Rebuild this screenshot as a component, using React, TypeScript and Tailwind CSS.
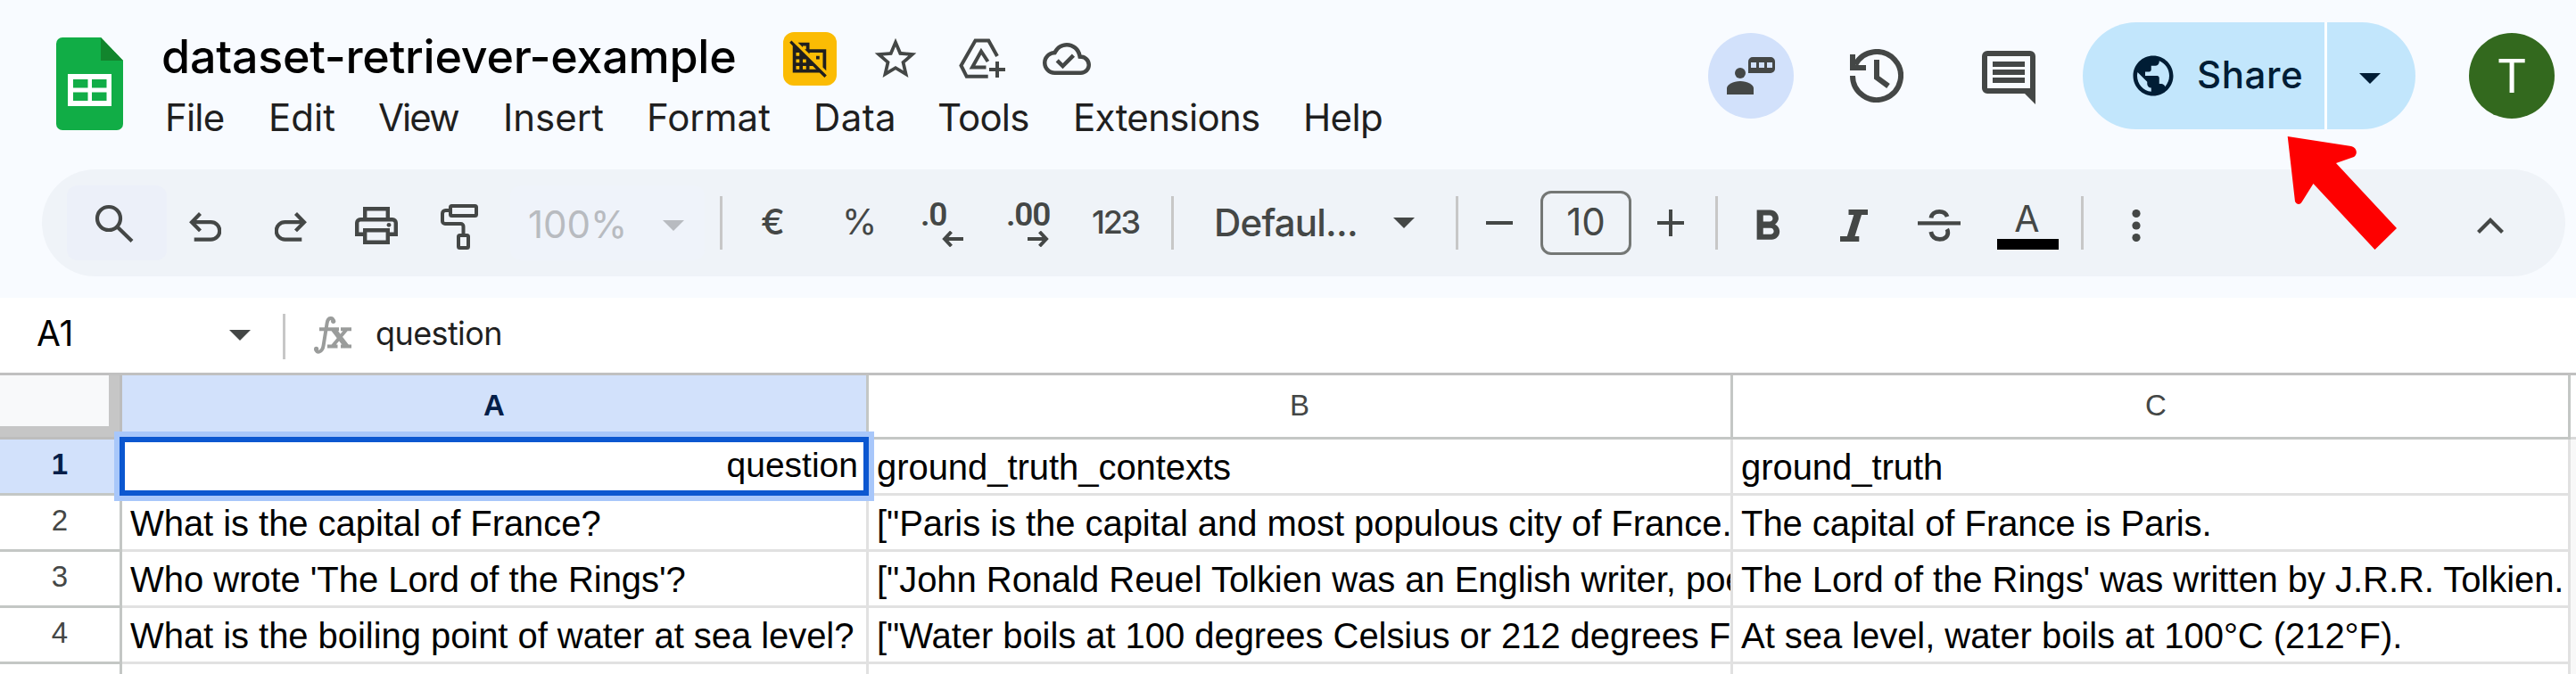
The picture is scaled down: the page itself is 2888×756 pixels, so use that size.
import type { ReactNode } from "react";
import { MdDomainDisabled, MdFormatBold, MdOutlineCloudDone, MdPublic, MdStarBorder } from "react-icons/md";

function Triangle({ className }: { className: string }) {
  return (
    <svg viewBox="0 0 24 12" className={`h-3 w-6 shrink-0 ${className}`} fill="currentColor">
      <path d="M0 0h24L12 12z" />
    </svg>
  );
}

function Divider({ className }: { className: string }) {
  return <div className={`h-[60px] w-[3px] shrink-0 bg-[#c7c7c7] ${className}`} />;
}

function SheetsLogo() {
  return (
    <svg viewBox="0 0 75 104" className="mt-[42px] ml-[63px] h-[104px] w-[75px] shrink-0">
      <path d="M7 0h43l25 26v71a7 7 0 0 1-7 7H7a7 7 0 0 1-7-7V7a7 7 0 0 1 7-7z" fill="#11ad46" />
      <path d="M50 0l25 26H50z" fill="#12852d" />
      <path fillRule="evenodd" fill="#fff" d="M13 41h49v36H13zM19 47v9.500h16.500V47zM40 47v9.500h16.500V47zM19 61.500V71h16.500v-9.500zM40 61.500V71h16.500v-9.500z" />
    </svg>
  );
}

function AddToDriveIcon() {
  return (
    <svg viewBox="0 0 53 46" className="ml-[43px] h-[46px] w-[53px] shrink-0" fill="none" stroke="currentColor" strokeWidth="4">
      <path d="M43 20L33.300 2.500H18.500L2.500 30.500l6.200 12.300h24" />
      <path d="M32.500 26L25 14.500 15 32.500h15.500" />
      <path d="M34 35h18M43 26v18" />
    </svg>
  );
}

function FeedbackIcon() {
  return (
    <svg viewBox="0 0 96 96" className="size-24" fill="currentColor">
      <circle cx="36" cy="45" r="6" />
      <path d="M21 69v-7c0-4 7-8 15-8s15 4 15 8v7z" />
      <path fillRule="evenodd" d="M45 45V32a5 5 0 0 1 5-5h20a5 5 0 0 1 5 5v8a5 5 0 0 1-5 5zM48 33v6h6v-6zM57 33v6h6v-6zM66 33v6h6v-6z" />
    </svg>
  );
}

function HistoryIcon() {
  return (
    <svg viewBox="0 0 60 60" className="ml-[63px] size-[60px] shrink-0" fill="none" stroke="currentColor" strokeWidth="6">
      <path d="M3 30A27 27 0 1 0 6 17.600" />
      <path d="M3 6v15h15" />
      <path d="M30 12v20l13 9.500" />
    </svg>
  );
}

function CommentIcon() {
  return (
    <svg viewBox="0 0 60 60" className="mt-1 ml-[88px] size-[60px] shrink-0" fill="currentColor">
      <path fillRule="evenodd" d="M6 0h48a6 6 0 0 1 6 6v54L48 48H6a6 6 0 0 1-6-6V6a6 6 0 0 1 6-6zM6 6v36h48V6z" />
      <path d="M12 12h36v6H12zM12 21h36v6H12zM12 30h36v6H12z" />
    </svg>
  );
}

function UndoIcon({ className }: { className: string }) {
  return (
    <svg viewBox="0 0 36 33" className={`mt-[9px] h-[33px] w-9 shrink-0 ${className}`} fill="none" stroke="currentColor" strokeWidth="4.2">
      <path d="M12.500 1.500L3 11.200l9.500 9.700" />
      <path d="M3 11.200h21.500a9.700 9.700 0 0 1 0 19.500H5.700" />
    </svg>
  );
}

function PrintIcon() {
  return (
    <svg viewBox="0 0 48 42" className="mt-1.5 ml-[54px] h-[42px] w-12 shrink-0" fill="none" stroke="currentColor" strokeWidth="4.4">
      <path d="M11.200 14V2.200h25.600V14" />
      <path d="M11 30.800H2.200V18a3.800 3.800 0 0 1 3.800-3.800h36a3.800 3.800 0 0 1 3.800 3.800v12.800H37" />
      <path d="M11.200 26.200h25.600v13.600H11.200z" />
      <circle cx="38" cy="20.300" r="2.400" fill="currentColor" stroke="none" />
    </svg>
  );
}

function PaintIcon() {
  return (
    <svg viewBox="0 0 43 51" className="mt-[9px] ml-12 h-[51px] w-[43px] shrink-0" fill="none" stroke="currentColor" strokeWidth="4">
      <rect x="11" y="2" width="29" height="11" rx="1.500" />
      <path d="M10 7H5.500A3.500 3.500 0 0 0 2 10.500V19a3 3 0 0 0 3 3h17.500a3 3 0 0 1 3 3v9" />
      <rect x="20" y="35" width="11" height="14" rx="1.500" />
    </svg>
  );
}

function FunctionIcon() {
  return (
    <svg viewBox="0 0 44 44" className="mr-[26px] ml-[31px] size-11 shrink-0 text-[#9a9c9b]" fill="none" stroke="currentColor" strokeWidth="4">
      <path d="M23 6.500c-.8-5-6.300-5-7.300 1.500L11.700 33c-1.200 8.500-8 10-8.700 4.500" />
      <circle cx="22.700" cy="6.300" r="2.600" fill="currentColor" stroke="none" />
      <circle cx="3.600" cy="37.300" r="2.600" fill="currentColor" stroke="none" />
      <path d="M7 15.200h22M31 15.200h12M16 34.500h11.500M31 34.500h12M37.500 15.500l-16 19" />
      <path d="M23 15.500l14.500 19" strokeWidth="6" />
    </svg>
  );
}

function DecimalIcon({ digits, children }: { digits: string; children: ReactNode }) {
  return (
    <div className="relative h-[60px] w-24 shrink-0">
      <span className="absolute -top-px left-0 font-['Roboto',sans-serif] text-[37px] leading-[44px] font-semibold tracking-[-1.2px]">{digits}</span>
      <svg viewBox="0 0 24 18" className="absolute top-[39px] left-6 h-[18px] w-6" fill="none" stroke="currentColor" strokeWidth="4">
        {children}
      </svg>
    </div>
  );
}

const menu = [
  { label: "File", cls: "w-[116px] tracking-[-0.8px]" },
  { label: "Edit", cls: "w-[123px]" },
  { label: "View", cls: "w-[140px] tracking-[-1.9px]" },
  { label: "Insert", cls: "w-[161px]" },
  { label: "Format", cls: "w-[187px]" },
  { label: "Data", cls: "w-[139px] tracking-[0.4px]" },
  { label: "Tools", cls: "w-[152px] tracking-[-0.8px]" },
  { label: "Extensions", cls: "w-[258px] tracking-[-0.65px]" },
  { label: "Help", cls: "w-[90px] tracking-[-0.6px]" },
];

function Header() {
  return (
    <header className="flex h-[190px]">
      <SheetsLogo />
      <div className="ml-[43px] w-[1734px] shrink-0 pt-9">
        <div className="flex h-[60px] items-center text-[#444746]">
          <h1 className="mb-1 w-[697px] shrink-0 text-[52px] leading-[60px] font-[450] tracking-[-0.25px] text-black">dataset-retriever-example</h1>
          <div className="flex size-[60px] shrink-0 items-center justify-center rounded-xl bg-[#fbbc04] text-[#1f1f1f]">
            <MdDomainDisabled className="mr-px mb-1 size-[45px]" />
          </div>
          <MdStarBorder className="ml-[38px] size-14 shrink-0" />
          <AddToDriveIcon />
          <MdOutlineCloudDone className="ml-[41px] size-[54px] shrink-0" />
        </div>
        <nav className="mt-1.5 ml-1 flex h-[60px] text-[42px] leading-[60px] text-[#1f1f1f]">
          {menu.map((m) => (
            <span key={m.label} className={`shrink-0 ${m.cls}`}>{m.label}</span>
          ))}
        </nav>
      </div>
      <div className="flex h-[170px] items-center text-[#444746]">
        <div className="size-24 shrink-0 rounded-full bg-[#d2e1fb]">
          <FeedbackIcon />
        </div>
        <HistoryIcon />
        <CommentIcon />
        <div className="ml-[53px] flex h-[120px] w-[373px] shrink-0 items-center overflow-hidden rounded-full bg-[#c2e6fc] text-[#001d35]">
          <MdPublic className="ml-[52px] size-[54px] shrink-0" />
          <span className="mb-[3px] ml-[22px] w-[143px] shrink-0 text-[42px] font-medium tracking-[0.6px]">Share</span>
          <div className="h-full w-[3px] shrink-0 bg-white" />
          <Triangle className="mt-1.5 ml-[36px]" />
        </div>
        <div className="ml-[60px] flex size-24 shrink-0 items-center justify-center rounded-full bg-[#33691e] pt-1 font-['Roboto',sans-serif] text-[53px] text-white">T</div>
      </div>
    </header>
  );
}

function Toolbar() {
  return (
    <div className="ml-[47px] flex h-[120px] w-[2829px] items-center rounded-full bg-[#eff3f8] text-[42px] text-[#444746]">
      <div className="ml-7 flex h-[84px] w-28 shrink-0 items-center rounded-xl bg-[#ecf0f9] pl-[31px]">
        <svg viewBox="0 0 44 43" className="h-[43px] w-11" fill="none" stroke="currentColor" strokeWidth="4.2">
          <circle cx="16" cy="16" r="13" />
          <path d="M25 25l17 16.500" />
        </svg>
      </div>
      <UndoIcon className="ml-[25px]" />
      <UndoIcon className="ml-[60px] -scale-x-100" />
      <PrintIcon />
      <PaintIcon />
      <div className="ml-[35px] flex h-[84px] w-[218px] shrink-0 items-center rounded-xl bg-[#eff3fa] pl-[20px] text-[#b8bbc0]">
        <span className="mt-[3px] w-[151px] shrink-0">100%</span>
        <Triangle className="mt-1.5" />
      </div>
      <Divider className="ml-[17px]" />
      <span className="mb-[3px] ml-[43px] w-[91px] shrink-0 text-[40px] font-medium">€</span>
      <span className="mb-[3px] w-[88px] shrink-0 text-[40px] tracking-[-1px]">%</span>
      <DecimalIcon digits=".0">
        <path d="M24 9H3M10.500 1L3 9l7.500 8" />
      </DecimalIcon>
      <DecimalIcon digits=".00">
        <path d="M0 9h21M13.500 1L21 9l-7.500 8" />
      </DecimalIcon>
      <span className="mb-[3px] w-[89px] shrink-0 text-[36px] font-medium tracking-[-2.3px]">123</span>
      <Divider className="" />
      <span className="mb-[2px] ml-[45px] w-[201px] shrink-0 font-medium tracking-[-0.8px]">Defaul...</span>
      <Triangle className="" />
      <Divider className="ml-[46px]" />
      <div className="ml-[31px] h-1 w-[30px] shrink-0 bg-[#444746]" />
      <div className="ml-[31px] flex h-[72px] w-[102px] shrink-0 items-center justify-center rounded-xl border-3 border-[#747775] pb-[3px]">10</div>
      <svg viewBox="0 0 30 30" className="ml-[29px] size-[30px] shrink-0" stroke="currentColor" strokeWidth="4">
        <path d="M0 15h30M15 0v30" />
      </svg>
      <Divider className="ml-[35px]" />
      <MdFormatBold className="mt-2 ml-[27px] size-[57px] shrink-0" />
      <svg viewBox="0 0 31 36" className="mt-1.5 ml-[53px] h-9 w-[31px] shrink-0" fill="currentColor">
        <path d="M9.500 0H31v6h-7l-7.500 24h4.800v6H0v-6h7.800l7.500-24H9.500z" />
      </svg>
      <svg viewBox="0 0 48 36" className="mt-1.5 ml-14 h-9 w-12 shrink-0" fill="none" stroke="currentColor" strokeWidth="4.8">
        <path d="M15 9.500c.5-4.500 4.500-7.100 9.300-7.100 4.500 0 7.500 2 8.800 5.600" />
        <path d="M14.800 25c.8 5 4.500 8.400 9.800 8.400 5.500 0 9.200-3 9.200-7.500 0-1.500-.4-2.800-1-3.800" />
        <path d="M0 15.400h48" strokeWidth="4.400" />
      </svg>
      <div className="mt-1.5 ml-[41px] flex h-[54px] w-[69px] shrink-0 flex-col items-center">
        <span className="h-[42px] pr-0.5 text-[41px] leading-[38px]">A</span>
        <div className="h-3 w-full bg-black" />
      </div>
      <Divider className="ml-[25px]" />
      <svg viewBox="0 0 10 36" className="mt-1.5 ml-[54px] h-9 w-2.5 shrink-0" fill="currentColor">
        <circle cx="5" cy="4.500" r="4.600" />
        <circle cx="5" cy="18" r="4.600" />
        <circle cx="5" cy="31.500" r="4.600" />
      </svg>
      <svg viewBox="0 0 30 18" className="mt-1.5 mr-[69px] ml-auto h-[18px] w-[30px] shrink-0" fill="none" stroke="currentColor" strokeWidth="4.200">
        <path d="M1.500 16.500L15 3l13.500 13.500" />
      </svg>
    </div>
  );
}

function FormulaBar() {
  return (
    <div className="flex h-[84px] items-center bg-white pl-[41px]">
      <span className="mb-1 w-[216px] shrink-0 text-[39px] text-black">A1</span>
      <Triangle className="text-[#444746]" />
      <div className="mt-[3px] ml-9 h-[51px] w-[3px] shrink-0 bg-[#c7c7c7]" />
      <FunctionIcon />
      <span className="mb-[5px] text-[36px] tracking-[-0.6px] text-[#1f1f1f]">question</span>
    </div>
  );
}

const rows = [
  ["question", "ground_truth_contexts", "ground_truth"],
  ["What is the capital of France?", '["Paris is the capital and most populous city of France.', "The capital of France is Paris."],
  ["Who wrote 'The Lord of the Rings'?", '["John Ronald Reuel Tolkien was an English writer, poe', "The Lord of the Rings' was written by J.R.R. Tolkien."],
  ["What is the boiling point of water at sea level?", '["Water boils at 100 degrees Celsius or 212 degrees F', "At sea level, water boils at 100°C (212°F)."],
  ["", "", ""],
];

function Grid() {
  return (
    <div className="relative h-[338px] overflow-hidden border-t-3 border-[#c0c0c0] bg-white font-['Liberation_Sans',sans-serif]">
      <div className="grid grid-cols-[137px_837px_969px_939px_6px] grid-rows-[72px]">
        <div className="border-r-3 border-b-3 border-[#bdbdbd] bg-[#c6c6c6]">
          <div className="h-[57px] w-[122px] bg-[#f8f9fa]" />
        </div>
        <div className="flex items-center justify-center border-r-3 border-b-3 border-[#c4c7c5] bg-[#d2e1fb] pb-0.5 text-[33px] font-bold text-[#041e49]">A</div>
        <div className="flex items-center justify-center border-r-3 border-b-3 border-[#c4c7c5] pb-0.5 text-[33px] text-[#444746]">B</div>
        <div className="flex items-center justify-center border-r-3 border-b-3 border-[#c4c7c5] pb-0.5 pl-3 text-[33px] text-[#444746]">C</div>
        <div className="border-b-3 border-[#d9d9d9]" />
      </div>
      {rows.map((r, i) => (
        <div key={i} className="grid h-[63px] grid-cols-[137px_837px_969px_939px_6px] text-[40px] tracking-[-0.05px] text-black">
          <div className={`flex items-center justify-center border-r-3 border-b-3 border-[#c4c7c5] pb-[5px] text-[33px] ${i === 0 ? "bg-[#d2e1fb] font-bold text-[#041e49]" : "text-[#444746]"}`}>
            {i < 4 ? i + 1 : ""}
          </div>
          {r.map((c, j) => (
            <div key={j} className="overflow-hidden border-r-3 border-b-3 border-[#e1e1e1] pt-px pl-[9px] leading-[60px] whitespace-nowrap">
              {i === 0 && j === 0 ? "" : c}
            </div>
          ))}
          <div className="bg-[#f8f8f8]" />
        </div>
      ))}
      <div className="absolute top-[63px] left-[128px] h-[78px] w-[852px] border-6 border-[#a8c7fa]">
        <div className="h-full border-6 border-[#0b57d0] bg-white pr-[6px] text-right text-[39px] leading-[52px] text-black">question</div>
      </div>
    </div>
  );
}

export default function App() {
  return (
    <div className="relative h-[756px] w-[2888px] overflow-hidden bg-[#f8fbff] font-['Inter',sans-serif]">
      <Header />
      <Toolbar />
      <div className="h-6" />
      <FormulaBar />
      <Grid />
      <svg viewBox="0 0 130 132" className="absolute top-[150px] left-[2562px] h-[132px] w-[130px]" fill="#fe0000">
        <path d="M2.700 3L74 14c6 1.500 8 8 3 12L57 33l68 73-24.500 24L31.500 56 19 76c-2 4-6 4-8 0z" />
      </svg>
    </div>
  );
}
